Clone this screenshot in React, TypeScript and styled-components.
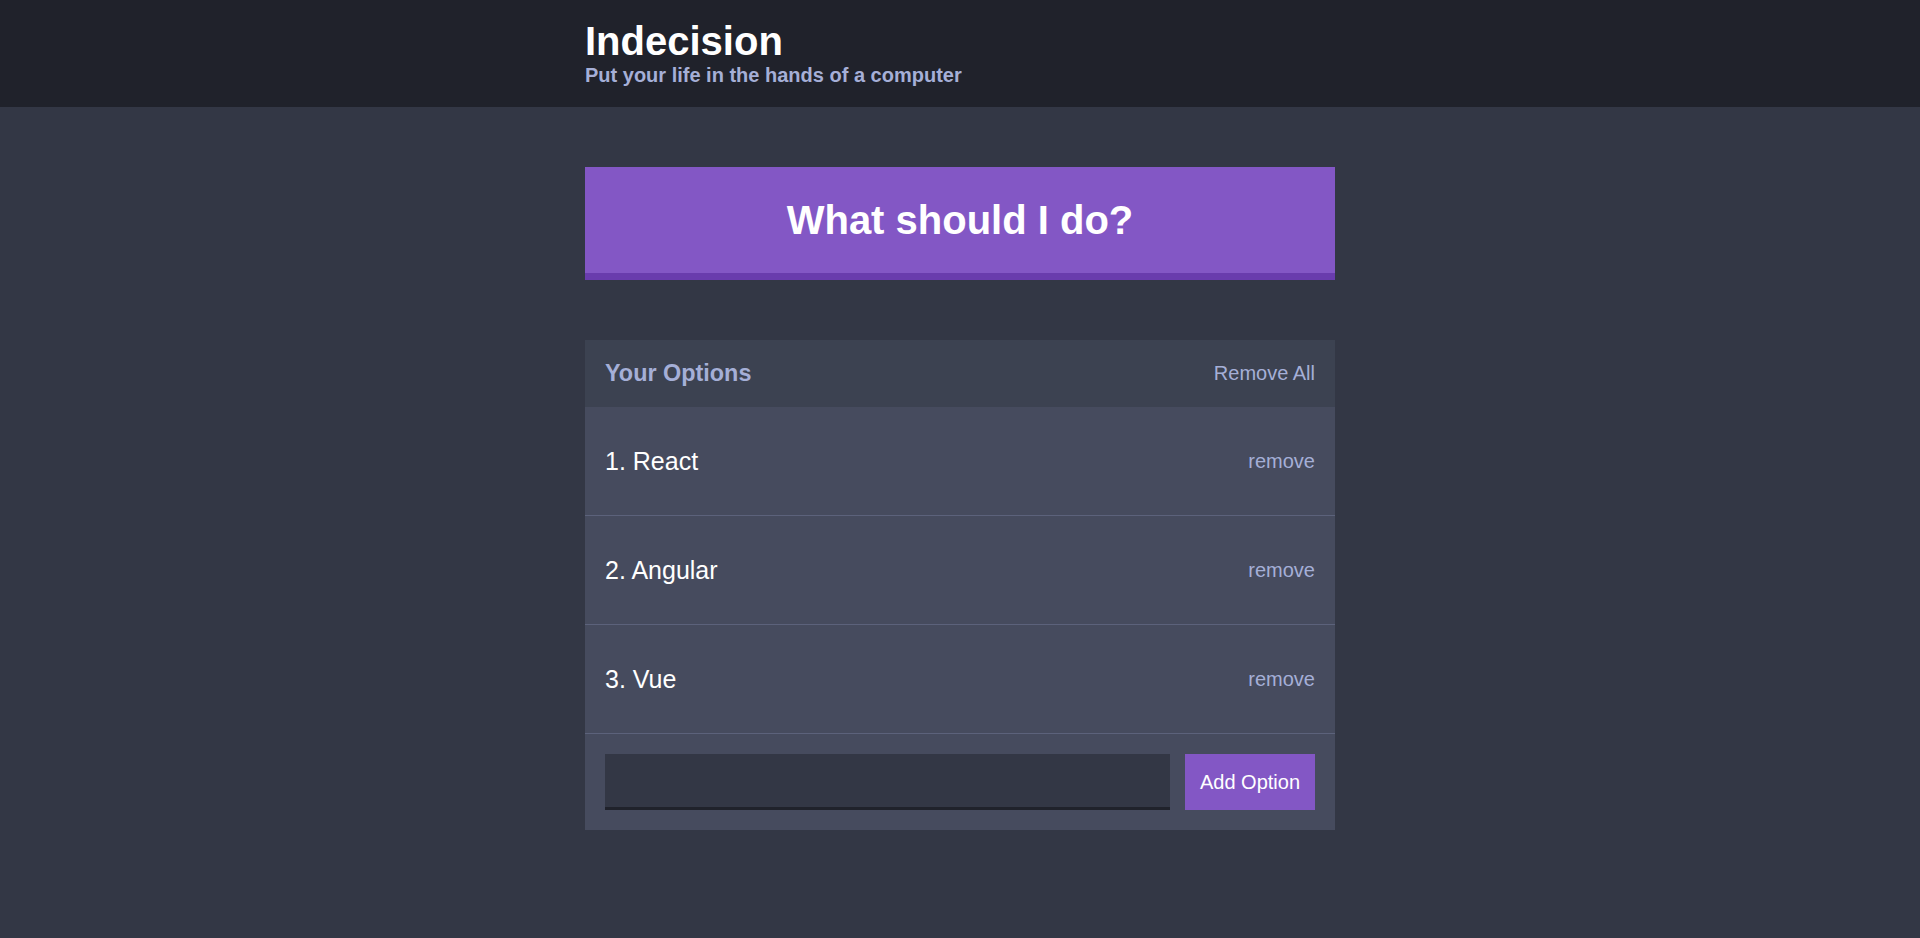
import React from "react";
import styled, { createGlobalStyle } from "styled-components";

const GlobalStyle = createGlobalStyle`
  * { box-sizing: border-box; }
  html, body { margin: 0; padding: 0; }
  body {
    background: #333745;
    font-family: "Liberation Sans", Arial, Helvetica, sans-serif;
    font-size: 20px;
    line-height: 23px;
    color: #ffffff;
    min-height: 938px;
  }
`;

const Header = styled.header`
  background: #20222b;
  padding: 18px 0 20px;
`;

const Container = styled.div`
  max-width: 750px;
  margin: 0 auto;
`;

const Title = styled.h1`
  margin: 0;
  font-size: 40px;
  line-height: 46px;
  font-weight: bold;
  color: #ffffff;
`;

const Subtitle = styled.h2`
  margin: 0;
  font-size: 20px;
  line-height: 23px;
  font-weight: bold;
  color: #a5afd7;
`;

const Main = styled.main`
  padding-top: 60px;
`;

const BigButton = styled.button`
  display: block;
  width: 100%;
  background: #8357c5;
  border: none;
  border-bottom: 7.5px solid #693cad;
  color: #ffffff;
  font-family: inherit;
  font-weight: bold;
  font-size: 40px;
  line-height: 46px;
  padding: 30px;
  margin: 0 0 60px;
  cursor: pointer;
`;

const Widget = styled.div`
  background: #464b5e;
  margin-bottom: 60px;
`;

const WidgetHeader = styled.div`
  display: flex;
  align-items: center;
  justify-content: space-between;
  background: #3c4251;
  padding: 20px;
`;

const WidgetTitle = styled.h3`
  margin: 0;
  font-size: 23.4px;
  line-height: 27px;
  font-weight: bold;
  color: #a5afd7;
`;

const LinkButton = styled.button`
  background: none;
  border: none;
  padding: 0;
  color: #a5afd7;
  font-family: inherit;
  font-size: 20px;
  line-height: 23px;
  cursor: pointer;
`;

const OptionRow = styled.div`
  display: flex;
  align-items: center;
  justify-content: space-between;
  padding: 40px 20px;
  border-bottom: 1px solid #5c627b;
`;

const OptionText = styled.p`
  margin: 0;
  font-size: 25px;
  line-height: 28px;
  color: #ffffff;
`;

const Form = styled.form`
  display: flex;
  padding: 20px;
`;

const Input = styled.input`
  flex: 1 1 auto;
  min-width: 0;
  background: #333745;
  border: none;
  border-bottom: 3.75px solid #20222b;
  color: #a5afd7;
  font-family: inherit;
  font-size: 20px;
  line-height: 23px;
  padding: 15px;
  margin-right: 15px;
  outline: none;
`;

const Button = styled.button`
  flex: 0 0 130px;
  background: #8357c5;
  border: none;
  color: #ffffff;
  font-family: inherit;
  font-size: 20px;
  line-height: 23px;
  white-space: nowrap;
  padding: 15px 0;
  cursor: pointer;
`;

const options = ["React", "Angular", "Vue"];

export default function App() {
  return (
    <>
      <GlobalStyle />
      <Header>
        <Container>
          <Title>Indecision</Title>
          <Subtitle>Put your life in the hands of a computer</Subtitle>
        </Container>
      </Header>
      <Main>
        <Container>
          <BigButton>What should I do?</BigButton>
          <Widget>
            <WidgetHeader>
              <WidgetTitle>Your Options</WidgetTitle>
              <LinkButton>Remove All</LinkButton>
            </WidgetHeader>
            {options.map((o, i) => (
              <OptionRow key={o}>
                <OptionText>
                  {i + 1}. {o}
                </OptionText>
                <LinkButton>remove</LinkButton>
              </OptionRow>
            ))}
            <Form onSubmit={(e) => e.preventDefault()}>
              <Input type="text" name="option" />
              <Button>Add Option</Button>
            </Form>
          </Widget>
        </Container>
      </Main>
    </>
  );
}
